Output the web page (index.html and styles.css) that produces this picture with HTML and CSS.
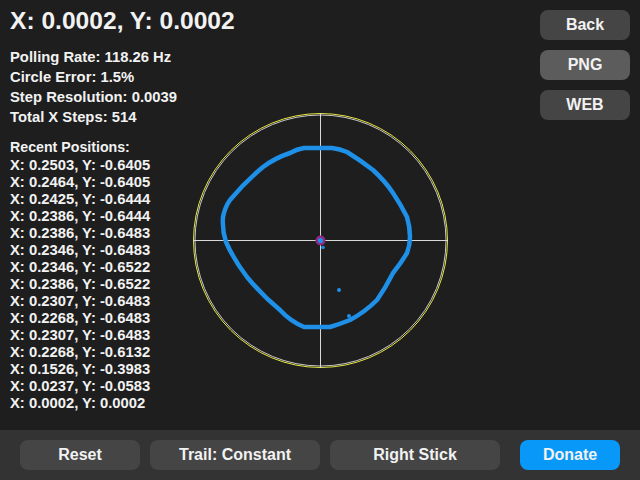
FILE: index.html
```html
<!DOCTYPE html>
<html lang="en">
<head>
  <meta charset="UTF-8" />
  <title>Stick Tester</title>
  <link rel="stylesheet" href="styles.css">
</head>
<body>

  <div class="screen">
    <div class="main">
      <div class="info">
        <div class="coords">X: 0.0002, Y: 0.0002</div>

        <div class="stats">
          <div>Polling Rate: 118.26 Hz</div>
          <div>Circle Error: 1.5%</div>
          <div>Step Resolution: 0.0039</div>
          <div>Total X Steps: 514</div>
        </div>

        <div class="recent">
          <div class="recent-title">Recent Positions:</div>
          <div class="pos">X: 0.2503, Y: -0.6405</div>
          <div class="pos">X: 0.2464, Y: -0.6405</div>
          <div class="pos">X: 0.2425, Y: -0.6444</div>
          <div class="pos">X: 0.2386, Y: -0.6444</div>
          <div class="pos">X: 0.2386, Y: -0.6483</div>
          <div class="pos">X: 0.2346, Y: -0.6483</div>
          <div class="pos">X: 0.2346, Y: -0.6522</div>
          <div class="pos">X: 0.2386, Y: -0.6522</div>
          <div class="pos">X: 0.2307, Y: -0.6483</div>
          <div class="pos">X: 0.2268, Y: -0.6483</div>
          <div class="pos">X: 0.2307, Y: -0.6483</div>
          <div class="pos">X: 0.2268, Y: -0.6132</div>
          <div class="pos">X: 0.1526, Y: -0.3983</div>
          <div class="pos">X: 0.0237, Y: -0.0583</div>
          <div class="pos">X: 0.0002, Y: 0.0002</div>
        </div>
      </div>

      <div class="plot">
        <svg width="260" height="260" viewBox="0 0 260 260">
          <!-- outer range circles -->
          <circle cx="130.5" cy="130.5" r="127" fill="none" stroke="#e6e63c" stroke-width="1" />
          <circle cx="130.5" cy="130.5" r="125.5" fill="none" stroke="#c8c8c8" stroke-width="1" />
          <!-- crosshair -->
          <line x1="3" y1="130.5" x2="258" y2="130.5" stroke="#d8d8d8" stroke-width="1" />
          <line x1="130.5" y1="3" x2="130.5" y2="258" stroke="#d8d8d8" stroke-width="1" />
          <!-- trail -->
          <path d="M114,38 L142,38 Q150,39 157,42 Q170,50 183,60 Q195,71 203,83 Q211,95 217,107 Q220,117 220,127
                   Q220,135 217,143 Q211,153 203,163 Q196,177 187,190 Q175,202 160,210 Q150,214 140,217 L114,217
                   Q100,211 90,200 Q72,185 57,167 Q44,150 36,132 Q32,120 33,107 Q35,97 40,90 Q55,72 73,57
                   Q85,48 100,43 Q107,39 114,38 Z"
                fill="none" stroke="#1e90e8" stroke-width="4.5" stroke-linejoin="round" />
          <circle cx="133" cy="137.5" r="1.8" fill="#1e90e8" />
          <circle cx="149" cy="180" r="2" fill="#1e90e8" />
          <circle cx="159" cy="206" r="2" fill="#1e90e8" />
          <!-- current position -->
          <circle cx="130.5" cy="130.5" r="3.8" fill="#1e90e8" stroke="#8e2a80" stroke-width="2.5" />
        </svg>
      </div>

      <div class="side">
        <button class="side-btn">Back</button>
        <button class="side-btn light">PNG</button>
        <button class="side-btn">WEB</button>
      </div>
    </div>

    <div class="toolbar">
      <button class="bar-btn reset">Reset</button>
      <button class="bar-btn wide">Trail: Constant</button>
      <button class="bar-btn wide">Right Stick</button>
      <button class="bar-btn donate">Donate</button>
    </div>
  </div>

</body>
</html>
```

FILE: styles.css
```css
body {
  margin: 0;
  background: #1e1e1e;
  color: #f2f2f2;
  font-family: 'Liberation Sans', Arial, sans-serif;
  font-weight: bold;
}

.screen {
  width: 640px;
  height: 480px;
  display: flex;
  flex-direction: column;
  overflow: hidden;
}

.main {
  height: 430px;
  display: grid;
  grid-template-columns: 190px 260px 190px;
}

.info {
  padding-left: 10px;
  white-space: nowrap;
}

.coords {
  padding-top: 7px;
  font-size: 24.6px;
  line-height: 28px;
}

.stats {
  margin-top: 12px;
  font-size: 14.8px;
  line-height: 20px;
}

.recent {
  margin-top: 10px;
  font-size: 14.8px;
}

.recent-title {
  line-height: 20px;
  font-size: 14.2px;
}

.pos {
  line-height: 17px;
}

.plot {
  margin-top: 110px;
  height: 260px;
}

.plot svg {
  display: block;
}

.side {
  display: flex;
  flex-direction: column;
  align-items: flex-end;
  gap: 10px;
  padding: 10px 10px 0 0;
}

button {
  font-family: 'Liberation Sans', Arial, sans-serif;
  font-weight: bold;
  font-size: 16px;
  color: #f2f2f2;
  border: none;
  border-radius: 8px;
  padding: 0;
  cursor: pointer;
}

.side-btn {
  width: 90px;
  height: 30px;
  background: #454545;
}

.side-btn.light {
  background: #5c5c5c;
}

.toolbar {
  flex: 1;
  background: #333333;
  display: flex;
  align-items: center;
  gap: 10px;
  padding: 0 20px;
}

.bar-btn {
  height: 30px;
  background: #454545;
}

.reset {
  width: 120px;
}

.wide {
  width: 170px;
}

.donate {
  width: 100px;
  margin-left: auto;
  background: #0898f8;
}
```
